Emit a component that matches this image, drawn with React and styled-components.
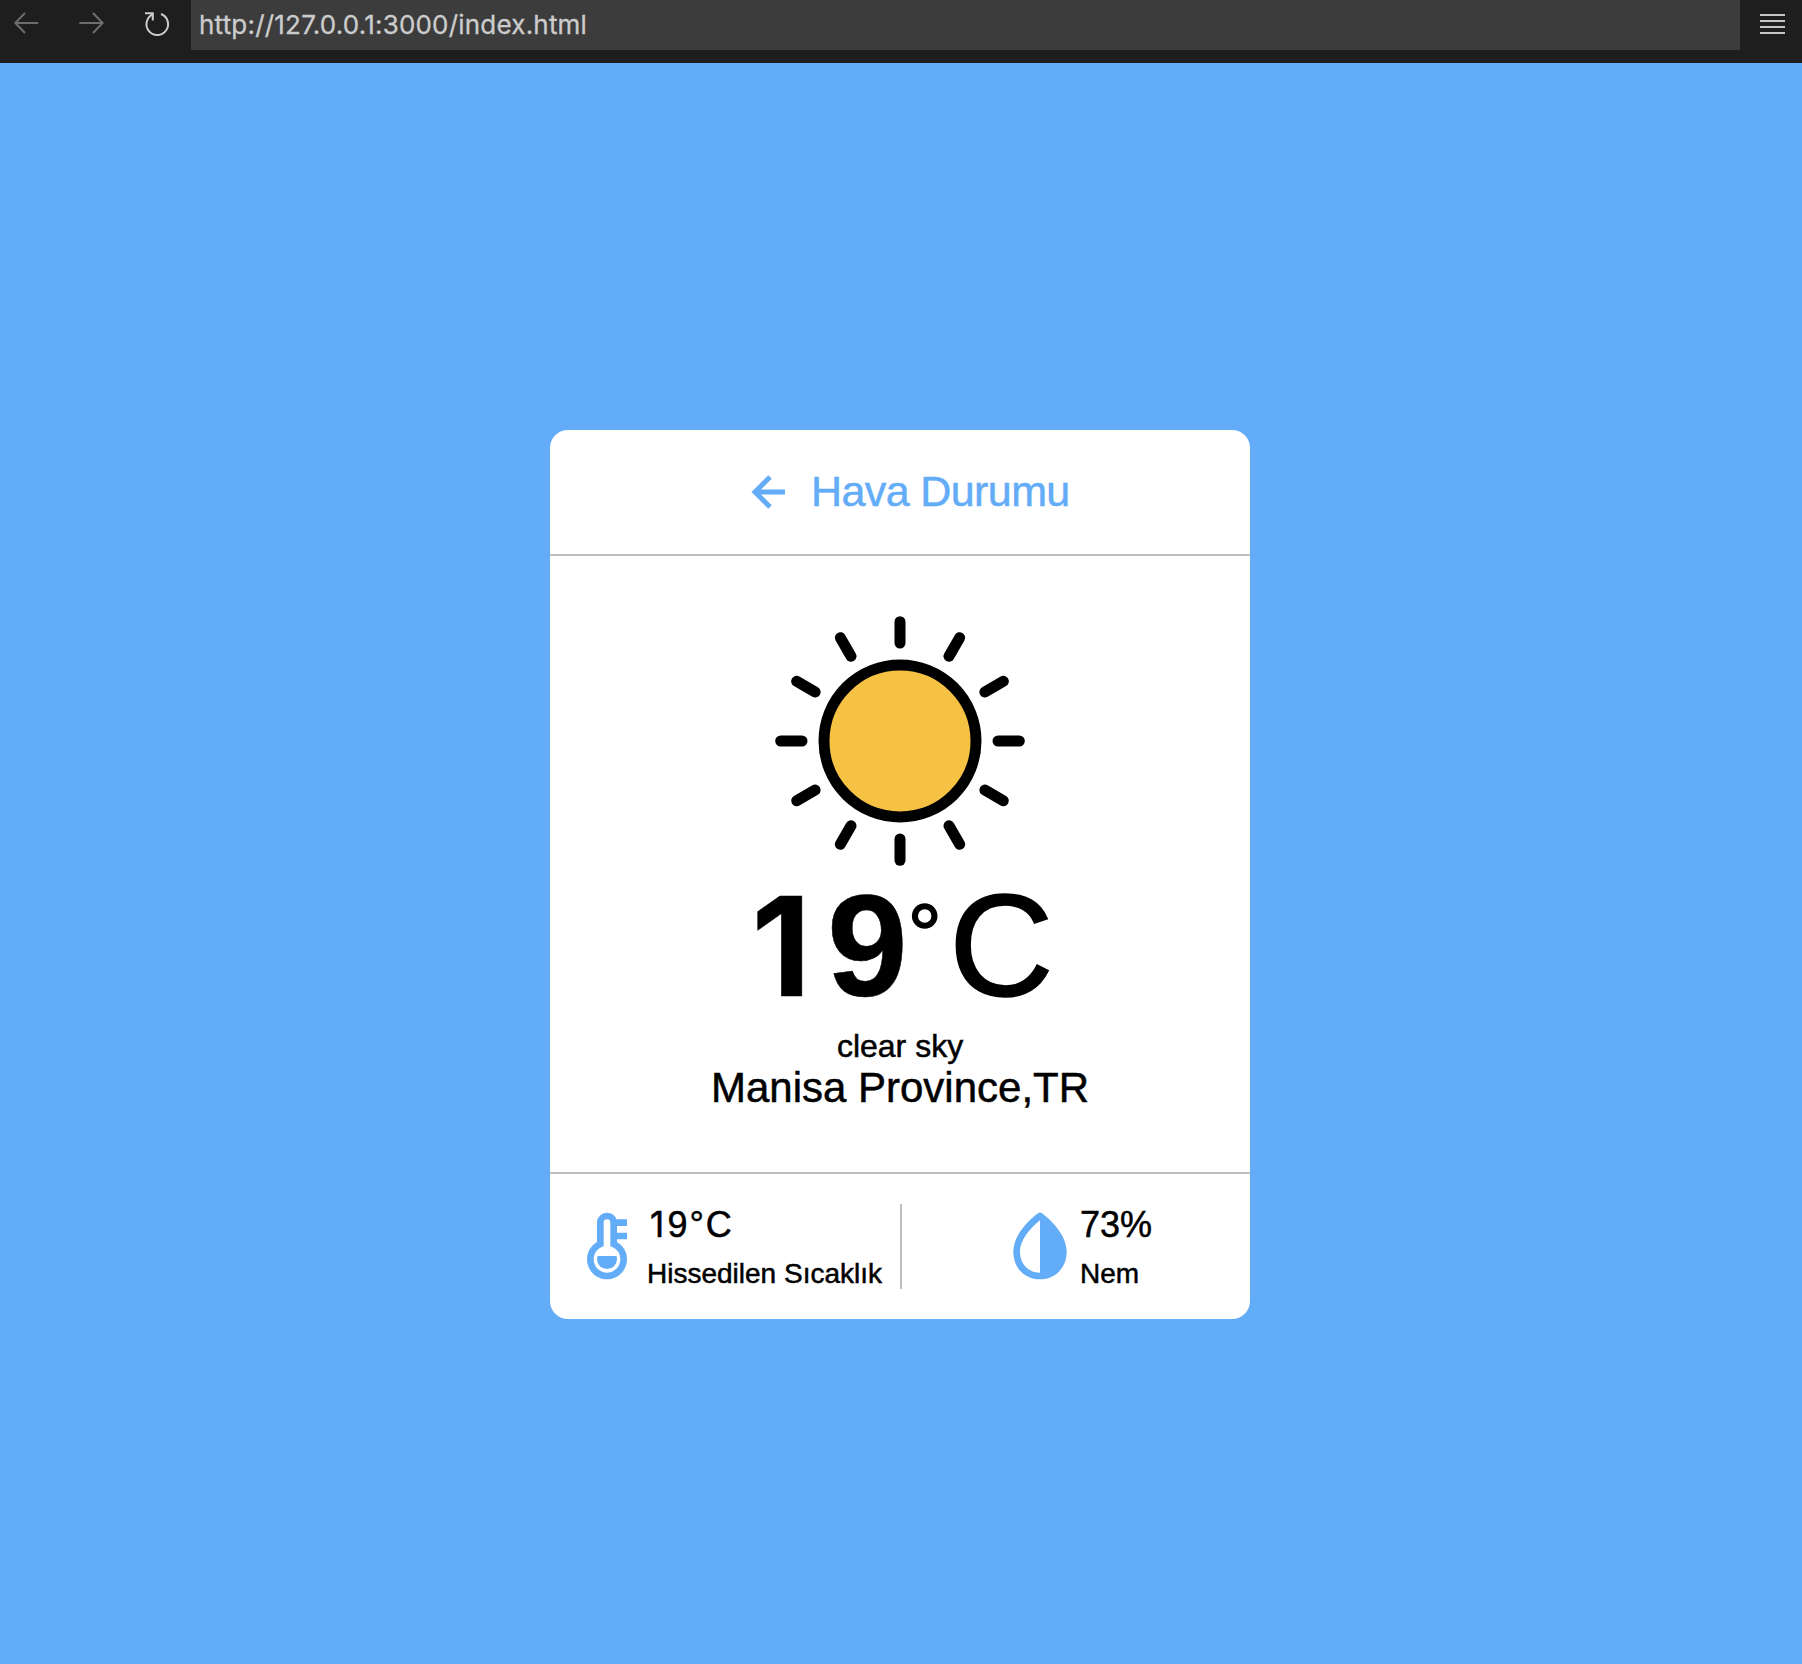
import React from "react";
import styled, { createGlobalStyle } from "styled-components";
import { BiLeftArrowAlt, BiSolidThermometer, BiSolidDropletHalf } from "react-icons/bi";

const BLUE = "#63acf7";
const LINE = "#bfbfbf";

const GlobalStyle = createGlobalStyle`
  *, *::before, *::after { box-sizing: border-box; }
  body {
    margin: 0;
    background: ${BLUE};
    font-family: "Liberation Sans", Helvetica, Arial, sans-serif;
  }
`;

const Page = styled.div`
  display: flex;
  flex-direction: column;
  height: 100vh;
  overflow: hidden;
`;

const Toolbar = styled.header`
  display: flex;
  align-items: flex-start;
  height: 63px;
  background: #1e1e1e;
`;

const NavButtons = styled.nav`
  display: flex;
  gap: 35px;
  width: 191px;
  padding: 8px 0 0 11px;
`;

const NavIcon = styled.svg`
  flex: none;
  width: 30px;
  height: 30px;
  fill: none;
  stroke: ${(p) => (p.$dim ? "#6d6d6d" : "#cccccc")};
  stroke-width: 2;
`;

const AddressBar = styled.div`
  flex: 1;
  height: 50px;
  padding-left: 8px;
  background: #3c3c3c;
  color: #cccccc;
  font: 26px/49px Inter, sans-serif;
  letter-spacing: 0.2px;
  -webkit-text-stroke: 0.3px currentColor;
`;

const MenuButton = styled.div`
  display: flex;
  flex-direction: column;
  gap: 4px;
  width: 62px;
  padding: 14px 17px 0 20px;
`;

const MenuLine = styled.span`
  height: 2px;
  background: #c5c5c5;
`;

const Main = styled.main`
  flex: 1;
  display: flex;
  justify-content: center;
  align-items: flex-start;
  padding: 367px 2px 0 0;
`;

const Card = styled.section`
  width: 700px;
  background: #fff;
  border-radius: 18px;
  color: #000;
  -webkit-text-stroke: 0.5px currentColor;
`;

const CardHeader = styled.div`
  display: flex;
  align-items: center;
  gap: 11px;
  height: 126px;
  padding-left: 190px;
  border-bottom: 2px solid ${LINE};
  color: ${BLUE};
`;

const Title = styled.h1`
  margin: 0;
  padding-bottom: 2px;
  font-size: 43px;
  font-weight: 400;
  line-height: 47px;
  letter-spacing: -0.6px;
`;

const Weather = styled.div`
  display: flex;
  flex-direction: column;
  align-items: center;
  height: 616px;
  padding-top: 58px;
`;

const SunIcon = styled.svg`
  flex: none;
  width: 254px;
  height: 254px;
`;

const Temperature = styled.div`
  display: flex;
  height: 154px;
  margin-bottom: 5px;
  font-size: 145px;
  line-height: 157px;
`;

const Value = styled.span`
  font-weight: 700;
`;

const One = styled.span`
  display: inline-block;
  width: 0.585em;
  padding-right: ${(p) => p.$shift || "0"};
  font-family: Inter, sans-serif;
  font-size: ${(p) => p.$size};
  line-height: 1;
  text-align: center;
`;

const Degree = styled.span`
  margin-right: 7px;
  font-size: 86px;
  line-height: 133px;
  -webkit-text-stroke-width: 1.5px;
`;

const Unit = styled.span`
  -webkit-text-stroke-width: 1.5px;
`;

const Condition = styled.div`
  font-size: 32px;
  line-height: 38px;
`;

const Place = styled.div`
  font-size: 42px;
  line-height: 45px;
`;

const Details = styled.div`
  display: flex;
  height: 147px;
  border-top: 2px solid ${LINE};
`;

const Divider = styled.div`
  width: 2px;
  height: 85px;
  margin-top: 30px;
  background: ${LINE};
`;

const Detail = styled.div`
  display: flex;
  align-items: flex-start;
  width: ${(p) => p.$width}px;
  padding: 27px 0 0 ${(p) => p.$inset}px;

  svg {
    flex: none;
    margin-top: 5px;
    color: ${BLUE};
  }
`;

const Reading = styled.div`
  font-size: 36px;
  line-height: 48px;
  white-space: nowrap;
`;

const ReadingDegree = styled.span`
  margin: 0 2px;
`;

const Label = styled.div`
  font-size: 28px;
  line-height: 49px;
  white-space: nowrap;
`;

const RAYS = Array.from({ length: 12 }, (_, i) => i * 30);

function Sun() {
  return (
    <SunIcon viewBox="-127 -127 254 254">
      <circle r="76" fill="#f6c244" stroke="#000" strokeWidth="11" />
      {RAYS.map((angle) => (
        <line
          key={angle}
          y1="-98"
          y2="-119.3"
          stroke="#000"
          strokeWidth="11"
          strokeLinecap="round"
          transform={`rotate(${angle})`}
        />
      ))}
    </SunIcon>
  );
}

export default function App() {
  return (
    <Page>
      <GlobalStyle />
      <Toolbar>
        <NavButtons>
          <NavIcon $dim viewBox="0 0 30 30">
            <path d="M27.3 15H4.3M14 5L4.3 15L14 25" />
          </NavIcon>
          <NavIcon $dim viewBox="0 0 30 30">
            <path d="M3.3 15h23M17 5l9.7 10L17 25" />
          </NavIcon>
          <NavIcon viewBox="0 0 30 30">
            <path d="M4 5.2h7.8v7.3M11.3 6.6A10.8 10.8 0 1 0 20 6.05" />
          </NavIcon>
        </NavButtons>
        <AddressBar>http://127.0.0.1:3000/index.html</AddressBar>
        <MenuButton>
          <MenuLine />
          <MenuLine />
          <MenuLine />
          <MenuLine />
        </MenuButton>
      </Toolbar>
      <Main>
        <Card>
          <CardHeader>
            <BiLeftArrowAlt size={60} />
            <Title>Hava Durumu</Title>
          </CardHeader>
          <Weather>
            <Sun />
            <Temperature>
              <Value>
                <One $size="0.95em" $shift="0.08em">1</One>9
              </Value>
              <Degree>°</Degree>
              <Unit>C</Unit>
            </Temperature>
            <Condition>clear sky</Condition>
            <Place>Manisa Province,TR</Place>
          </Weather>
          <Details>
            <Detail $width={350} $inset={17}>
              <BiSolidThermometer size={80} />
              <div>
                <Reading>
                  <One $size="0.97em">1</One>9<ReadingDegree>°</ReadingDegree>C
                </Reading>
                <Label>Hissedilen Sıcaklık</Label>
              </div>
            </Detail>
            <Divider />
            <Detail $width={348} $inset={98}>
              <BiSolidDropletHalf size={80} />
              <div>
                <Reading>73%</Reading>
                <Label>Nem</Label>
              </div>
            </Detail>
          </Details>
        </Card>
      </Main>
    </Page>
  );
}
